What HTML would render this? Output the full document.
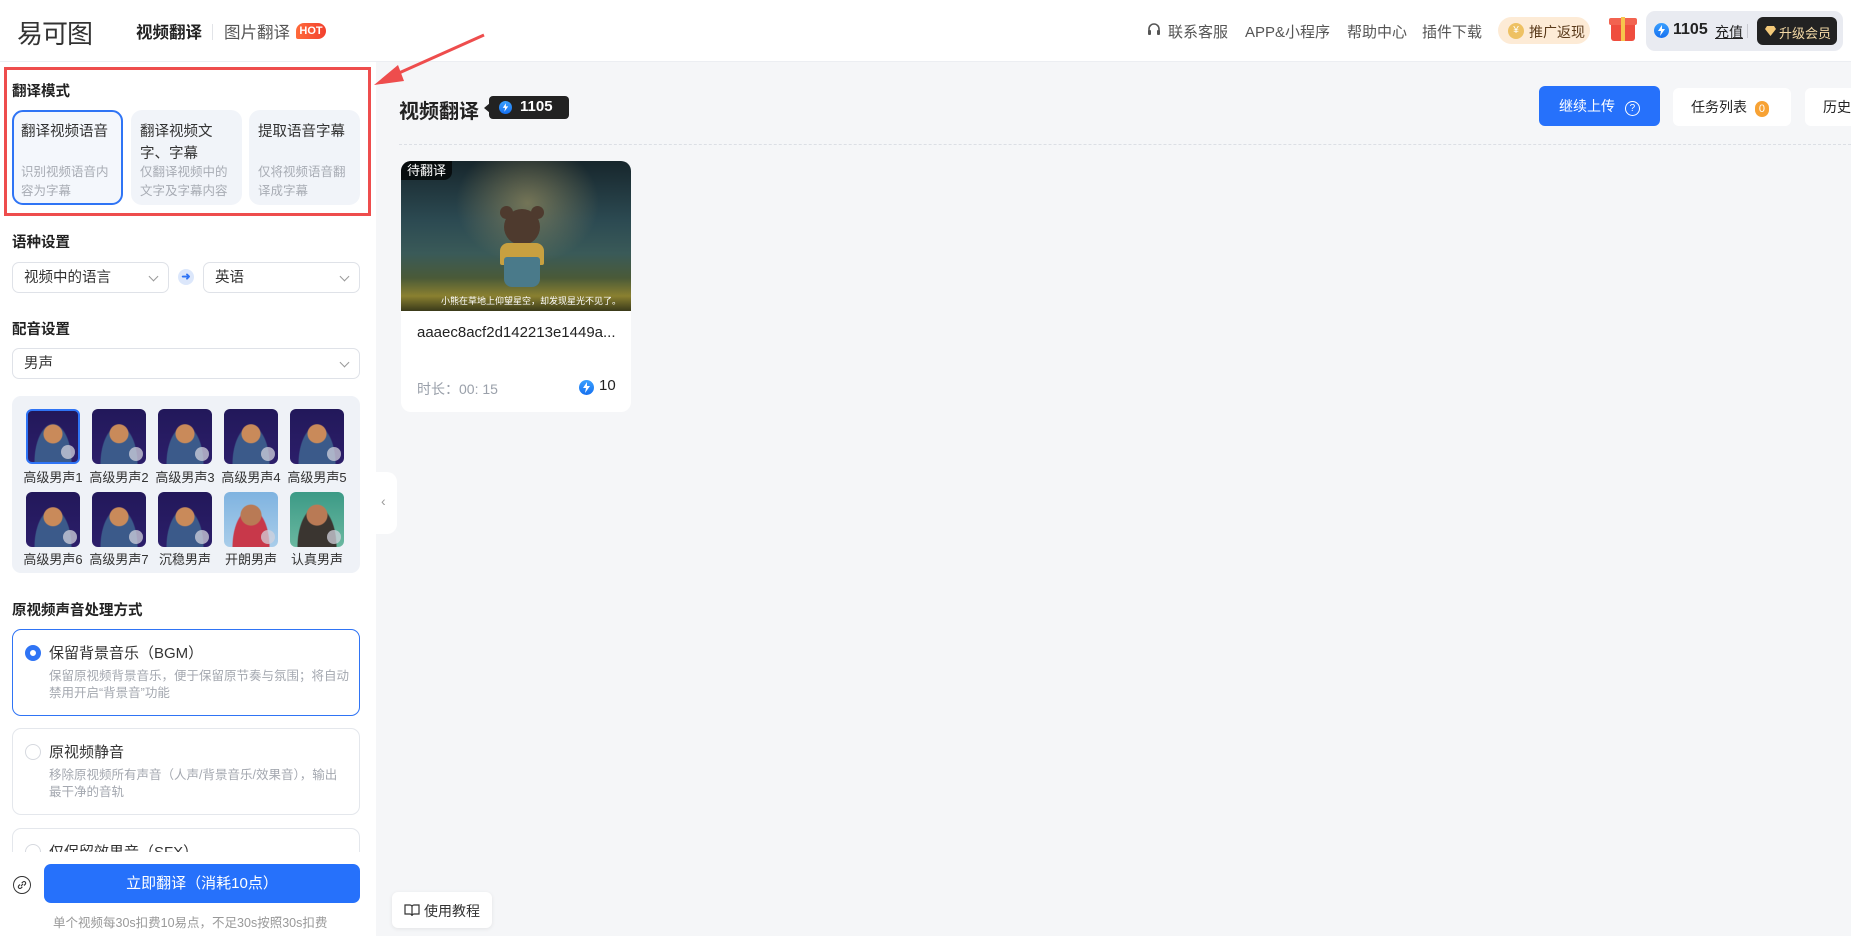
<!DOCTYPE html>
<html><head><meta charset="utf-8"><style>
*{box-sizing:border-box;margin:0;padding:0}
body{width:1851px;height:936px;overflow:hidden;position:relative;background:#f5f6f8;font-family:"Liberation Sans","Noto Sans CJK SC",sans-serif;color:#222}
.a{position:absolute}
.hdr{left:0;top:0;width:1851px;height:62px;background:#fff;border-bottom:1px solid #eceef2}
.t{position:absolute;white-space:nowrap}
.side{left:0;top:62px;width:376px;height:874px;background:#fff}
.h{font-size:14.5px;font-weight:bold;color:#222}
.card{position:absolute;top:110px;width:111px;height:95px;border-radius:11px;background:#f1f4f9}
.card .ti{position:absolute;left:9px;top:11px;font-size:14.5px;line-height:22px;color:#333;width:96px}
.card .de{position:absolute;left:9px;top:53px;font-size:12.5px;line-height:19px;color:#a8acb4;width:96px}
.sel{position:absolute;height:31px;border:1px solid #dfe2e8;border-radius:7px;background:#fff;font-size:14.5px;color:#333;line-height:30px;padding-left:11px}
.chev{position:absolute;right:11px;top:10px;width:7px;height:7px;border-right:1px solid #999;border-bottom:1px solid #999;transform:rotate(45deg)}
.av{position:absolute;width:54px;height:55px;border-radius:6px;overflow:hidden;background:radial-gradient(circle at 50% 45%,#c98a5a 0 9px,transparent 10px),radial-gradient(ellipse at 50% 100%,#3b5a8a 0 18px,transparent 19px),linear-gradient(#22185a,#2c1e6a)}
.av::after{content:"";position:absolute;right:3px;bottom:3px;width:14px;height:14px;border-radius:50%;background:rgba(210,210,220,.75)}
.lb{position:absolute;font-size:13px;color:#333;width:66px;text-align:center}
.opt{position:absolute;left:12px;width:348px;height:87px;border:1px solid #e4e7ec;border-radius:9px;background:#fff}
.opt .r{position:absolute;left:12px;top:15px;width:16px;height:16px;border-radius:50%;border:1px solid #d6d9df}
.opt .ot{position:absolute;left:36px;top:12px;font-size:15px;color:#333}
.opt .od{position:absolute;left:36px;top:38px;font-size:12.5px;line-height:17px;color:#a4a8b0;width:300px}
.hn{font-size:15px;color:#555;top:21px}
.bolt{position:absolute;border-radius:50%;background:linear-gradient(#3aa0ff,#1670f0)}
</style></head><body>
<div class="a hdr"></div>
<div class="t" style="left:17px;top:14px;font-size:26px;color:#333;letter-spacing:-1px;font-family:'WenQuanYi Zen Hei','Noto Sans CJK SC',sans-serif">易可图</div>
<div class="t" style="left:136px;top:19px;font-size:16.5px;font-weight:bold;color:#222">视频翻译</div>
<div class="a" style="left:212px;top:24px;width:1px;height:16px;background:#e2e4e8"></div>
<div class="t" style="left:224px;top:19px;font-size:16.5px;color:#555">图片翻译</div>
<div class="t" style="left:296px;top:23px;width:30px;height:16px;border-radius:8px 8px 8px 2px;background:linear-gradient(90deg,#ff6a3a,#f2402e);color:#fff;font-size:11px;font-weight:bold;text-align:center;line-height:16px">HOT</div>
<svg class="a" style="left:1146px;top:22px" width="16" height="16" viewBox="0 0 16 16"><path d="M3 9V7a5 5 0 0110 0v2" fill="none" stroke="#555" stroke-width="1.6"/><rect x="2" y="8" width="3" height="5" rx="1" fill="#555"/><rect x="11" y="8" width="3" height="5" rx="1" fill="#555"/></svg>
<div class="t hn" style="left:1168px">联系客服</div>
<div class="t hn" style="left:1245px">APP&amp;小程序</div>
<div class="t hn" style="left:1347px">帮助中心</div>
<div class="t hn" style="left:1422px">插件下载</div>
<div class="a" style="left:1498px;top:17px;width:92px;height:27px;border-radius:14px;background:#fdebd6"></div>
<div class="a" style="left:1508px;top:23px;width:16px;height:16px;border-radius:50%;background:#eec163;color:#fff;font-size:10px;text-align:center;line-height:16px">¥</div>
<div class="t" style="left:1529px;top:22px;font-size:14px;color:#5a3a1a">推广返现</div>
<div class="a" style="left:1611px;top:21px;width:24px;height:20px;background:#ef4d3e;border-radius:3px"></div>
<div class="a" style="left:1609px;top:18px;width:28px;height:7px;background:#f26350;border-radius:2px"></div>
<div class="a" style="left:1621px;top:17px;width:4px;height:24px;background:#f7c54c"></div>
<div class="a" style="left:1646px;top:11px;width:197px;height:40px;border-radius:9px;background:#e9ebf1"></div>
<div class="bolt" style="left:1654px;top:23px;width:15px;height:15px"></div>
<svg class="a" style="left:1657px;top:25px" width="9" height="11" viewBox="0 0 9 11"><path d="M5 0L1 6h3l-1 5 5-7H5z" fill="#fff"/></svg>
<div class="t" style="left:1673px;top:21px;font-size:16px;font-weight:bold;color:#222">1105</div>
<div class="t" style="left:1715px;top:22px;font-size:14px;color:#222;text-decoration:underline">充值</div>
<div class="a" style="left:1747px;top:24px;width:1px;height:14px;background:#c8cad0"></div>
<div class="a" style="left:1757px;top:17px;width:80px;height:28px;border-radius:6px;background:#222"></div>
<svg class="a" style="left:1765px;top:26px" width="11" height="10" viewBox="0 0 11 10"><path d="M2 0h7l2 3-5.5 7L0 3z" fill="#f3c979"/></svg>
<div class="t" style="left:1779px;top:23px;font-size:13px;color:#f3d9a6">升级会员</div>

<div class="a side"></div>
<div class="a" style="left:376px;top:472px;width:21px;height:62px;background:#fff;border-radius:0 10px 10px 0"></div>
<div class="t" style="left:381px;top:493px;font-size:14px;color:#999">‹</div>
<div class="t h" style="left:12px;top:80px">翻译模式</div>
<div class="card" style="left:12px;border:2px solid #2f74f5;background:#f4f7fc"><div class="ti" style="left:7px;top:9px">翻译视频语音</div><div class="de" style="left:7px;top:51px">识别视频语音内容为字幕</div></div>
<div class="card" style="left:131px"><div class="ti">翻译视频文字、字幕</div><div class="de">仅翻译视频中的文字及字幕内容</div></div>
<div class="card" style="left:249px"><div class="ti">提取语音字幕</div><div class="de">仅将视频语音翻译成字幕</div></div>
<div class="a" style="left:4px;top:67px;width:367px;height:149px;border:3px solid #ee4d4d"></div>
<svg class="a" style="left:360px;top:25px" width="140" height="80" viewBox="0 0 140 80"><path d="M124 10L30 52" stroke="#ee4d4d" stroke-width="3"/><path d="M14 60L38 40L44 56Z" fill="#ee4d4d"/></svg>

<div class="t h" style="left:12px;top:231px">语种设置</div>
<div class="sel" style="left:12px;top:262px;width:157px">视频中的语言<span class="chev"></span></div>
<div class="a" style="left:178px;top:269px;width:16px;height:16px;border-radius:50%;background:#dce7fb;color:#2f74f5;font-size:11px;text-align:center;line-height:16px;font-weight:bold">➜</div>
<div class="sel" style="left:203px;top:262px;width:157px">英语<span class="chev"></span></div>
<div class="t h" style="left:12px;top:318px">配音设置</div>
<div class="sel" style="left:12px;top:348px;width:348px">男声<span class="chev"></span></div>

<div class="a" style="left:12px;top:396px;width:348px;height:177px;border-radius:9px;background:#eff2f7"></div>
<div class="av" style="left:26px;top:409px;border:2px solid #2f74f5"></div>
<div class="av" style="left:92px;top:409px"></div>
<div class="av" style="left:158px;top:409px"></div>
<div class="av" style="left:224px;top:409px"></div>
<div class="av" style="left:290px;top:409px"></div>
<div class="av" style="left:26px;top:492px"></div>
<div class="av" style="left:92px;top:492px"></div>
<div class="av" style="left:158px;top:492px"></div>
<div class="av" style="left:224px;top:492px;background:radial-gradient(circle at 50% 42%,#b97a55 0 10px,transparent 11px),radial-gradient(ellipse at 50% 100%,#c8384a 0 18px,transparent 19px),linear-gradient(#7fb3e0,#a9cdea)"></div>
<div class="av" style="left:290px;top:492px;background:radial-gradient(circle at 50% 42%,#b97a55 0 10px,transparent 11px),radial-gradient(ellipse at 50% 100%,#3a3530 0 19px,transparent 20px),linear-gradient(#3c9a86,#6ab8a0)"></div>
<div class="lb" style="left:20px;top:467px">高级男声1</div>
<div class="lb" style="left:86px;top:467px">高级男声2</div>
<div class="lb" style="left:152px;top:467px">高级男声3</div>
<div class="lb" style="left:218px;top:467px">高级男声4</div>
<div class="lb" style="left:284px;top:467px">高级男声5</div>
<div class="lb" style="left:20px;top:549px">高级男声6</div>
<div class="lb" style="left:86px;top:549px">高级男声7</div>
<div class="lb" style="left:152px;top:549px">沉稳男声</div>
<div class="lb" style="left:218px;top:549px">开朗男声</div>
<div class="lb" style="left:284px;top:549px">认真男声</div>

<div class="t h" style="left:12px;top:599px">原视频声音处理方式</div>
<div class="opt" style="top:629px;border-color:#2f74f5"><div class="r" style="border:5px solid #2f74f5"></div><div class="ot">保留背景音乐（BGM）</div><div class="od">保留原视频背景音乐，便于保留原节奏与氛围；将自动禁用开启“背景音”功能</div></div>
<div class="opt" style="top:728px"><div class="r"></div><div class="ot">原视频静音</div><div class="od">移除原视频所有声音（人声/背景音乐/效果音），输出最干净的音轨</div></div>
<div class="opt" style="top:828px"><div class="r"></div><div class="ot">仅保留效果音（SFX）</div></div>
<div class="a" style="left:0;top:852px;width:376px;height:84px;background:#fff"></div>
<div class="a" style="left:13px;top:876px;width:18px;height:18px;border-radius:50%;border:1.5px solid #333"></div>
<svg class="a" style="left:16px;top:879px" width="12" height="12" viewBox="0 0 12 12"><path d="M5 7L7 5M4 5.5L2.8 6.7a1.6 1.6 0 002.3 2.3L6.3 7.8M8 6.5l1.2-1.2a1.6 1.6 0 00-2.3-2.3L5.7 4.2" fill="none" stroke="#333" stroke-width="1.1"/></svg>
<div class="a" style="left:44px;top:864px;width:316px;height:39px;border-radius:7px;background:#2671fb;color:#fff;font-size:15px;text-align:center;line-height:39px">立即翻译（消耗10点）</div>
<div class="t" style="left:53px;top:912px;font-size:12.5px;color:#999">单个视频每30s扣费10易点，不足30s按照30s扣费</div>

<div class="t" style="left:399px;top:95px;font-size:20px;font-weight:bold;color:#222">视频翻译</div>
<div class="a" style="left:489px;top:96px;width:80px;height:23px;border-radius:4px;background:#222"></div>
<div class="a" style="left:484px;top:103px;width:0;height:0;border-top:5px solid transparent;border-bottom:5px solid transparent;border-right:6px solid #222"></div>
<div class="bolt" style="left:499px;top:101px;width:13px;height:13px"></div>
<svg class="a" style="left:502px;top:103px" width="7" height="9" viewBox="0 0 9 11"><path d="M5 0L1 6h3l-1 5 5-7H5z" fill="#fff"/></svg>
<div class="t" style="left:520px;top:98px;font-size:15px;font-weight:bold;color:#fff">1105</div>
<div class="a" style="left:1539px;top:86px;width:121px;height:40px;border-radius:6px;background:#2671fb;color:#fff;font-size:14px;line-height:40px;padding-left:20px">继续上传 <span style="display:inline-block;width:15px;height:15px;border:1px solid #fff;border-radius:50%;font-size:10px;line-height:13px;text-align:center;margin-left:6px">?</span></div>
<div class="a" style="left:1673px;top:88px;width:118px;height:38px;border-radius:6px;background:#fff;font-size:14px;line-height:38px;padding-left:18px">任务列表 <span style="display:inline-block;width:14px;height:16px;border-radius:7px;background:#f7a234;color:#fff;font-size:11px;line-height:16px;text-align:center;margin-left:4px">0</span></div>
<div class="a" style="left:1805px;top:88px;width:60px;height:38px;border-radius:6px;background:#fff;font-size:14px;line-height:38px;padding-left:18px">历史</div>
<div class="a" style="left:399px;top:144px;width:1452px;border-top:1px dashed #dcdfe5"></div>

<div class="a" style="left:401px;top:161px;width:230px;height:251px;border-radius:10px;background:#fff;overflow:hidden">
<div class="a" style="left:0;top:0;width:230px;height:150px;background:radial-gradient(ellipse at 55% 28%,rgba(180,160,100,.55) 0,transparent 40%),linear-gradient(#17262c 0%,#2c4a52 40%,#3a5a58 62%,#4a5a38 78%,#8a8030 90%,#3a3a1a 100%)"></div>
<div class="a" style="left:103px;top:48px;width:36px;height:36px;border-radius:50%;background:#4e3a2e"></div>
<div class="a" style="left:99px;top:45px;width:13px;height:13px;border-radius:50%;background:#4e3a2e"></div>
<div class="a" style="left:130px;top:45px;width:13px;height:13px;border-radius:50%;background:#4e3a2e"></div>
<div class="a" style="left:99px;top:82px;width:44px;height:22px;border-radius:8px 8px 2px 2px;background:#c8a040"></div>
<div class="a" style="left:103px;top:96px;width:36px;height:30px;border-radius:3px 3px 8px 8px;background:#4a7a8a"></div>
<div class="t" style="left:40px;top:133px;font-size:9px;color:#fff">小熊在草地上仰望星空，却发现星光不见了。</div>
<div class="a" style="left:0;top:0;width:51px;height:19px;background:rgba(0,0,0,.7);border-radius:0 0 8px 0;color:#fff;font-size:13px;line-height:19px;padding-left:6px">待翻译</div>
<div class="t" style="left:16px;top:163px;font-size:15px;color:#222">aaaec8acf2d142213e1449a...</div>
<div class="t" style="left:16px;top:218px;font-size:14px;color:#9aa0aa">时长：00: 15</div>
<div class="bolt" style="left:178px;top:219px;width:15px;height:15px"></div>
<svg class="a" style="left:181px;top:221px" width="9" height="11" viewBox="0 0 9 11"><path d="M5 0L1 6h3l-1 5 5-7H5z" fill="#fff"/></svg>
<div class="t" style="left:198px;top:216px;font-size:15px;color:#222">10</div>
</div>

<div class="a" style="left:392px;top:892px;width:100px;height:36px;border-radius:6px;background:#fff;box-shadow:0 1px 4px rgba(0,0,0,.08)"></div>
<svg class="a" style="left:404px;top:903px" width="16" height="14" viewBox="0 0 16 14"><path d="M1 2h5a2 2 0 012 2v9a2 2 0 00-2-2H1zM15 2h-5a2 2 0 00-2 2v9a2 2 0 012-2h5z" fill="none" stroke="#333" stroke-width="1.2"/></svg>
<div class="t" style="left:424px;top:901px;font-size:14px;color:#333">使用教程</div>
</body></html>
